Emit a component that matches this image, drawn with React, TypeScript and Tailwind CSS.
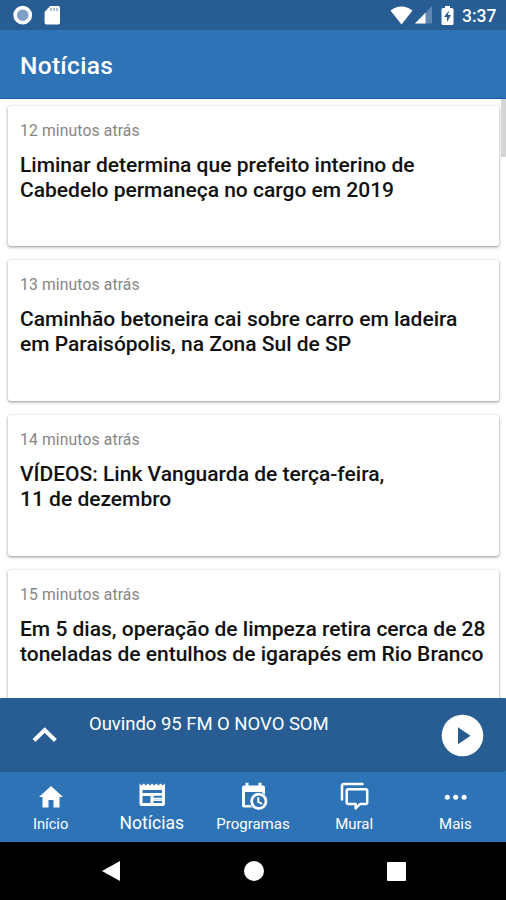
const news = [
  { time: '12 minutos atrás', lines: ['Liminar determina que prefeito interino de', 'Cabedelo permaneça no cargo em 2019'] },
  { time: '13 minutos atrás', lines: ['Caminhão betoneira cai sobre carro em ladeira', 'em Paraisópolis, na Zona Sul de SP'] },
  { time: '14 minutos atrás', lines: ['VÍDEOS: Link Vanguarda de terça-feira,', '11 de dezembro'] },
  { time: '15 minutos atrás', lines: ['Em 5 dias, operação de limpeza retira cerca de 28', 'toneladas de entulhos de igarapés em Rio Branco'] },
];

function StatusBar() {
  return (
    <div className="flex h-[30px] shrink-0 items-center bg-[#275d92] pl-[13px] pr-[9px]">
      <svg width="20" height="20" viewBox="0 0 20 20">
        <circle cx="9.7" cy="10.200" r="7.6" fill="#7f9fc6" stroke="#fff" strokeWidth="3.6" />
      </svg>
      <svg className="ml-[11px]" width="18" height="20" viewBox="0 0 18 20">
        <path fill="#fff" d="M6.2 1H14.2Q16 1 16 2.8V17.7Q16 19.5 14.2 19.5H2.3Q.6 19.5.6 17.7V7Z" />
        <path stroke="#275d92" strokeWidth="1.3" d="M7 3v3M10 3v3M13 3v3" opacity=".6" />
      </svg>
      <div className="grow" />
      <svg width="23" height="19" viewBox="0 0 23 19">
        <path fill="#fff" d="M.5 4.6Q11.500-3.400 22.500 4.600L11.500 18.500Z" />
      </svg>
      <svg className="ml-[1px]" width="19" height="18" viewBox="0 0 19 18">
        <path fill="#5f87b3" d="M18 0V17.500H1Z" />
        <path fill="#fff" d="M11.500 6.800V17.500H1Z" />
      </svg>
      <svg className="ml-[8px]" width="13" height="19" viewBox="0 0 13 19">
        <path fill="#fff" d="M4 0h5v2h2q1.500 0 1.500 1.500v14q0 1.500-1.500 1.500H2q-1.500 0-1.500-1.500v-14Q.5 2 2 2h2z" />
        <path fill="#275d92" d="M8 4.500 3 11h3v5l4-7H7z" />
      </svg>
      <span className="ml-[8px] w-[35px] whitespace-nowrap pt-px text-[17.500px] font-medium leading-[30px] text-white">3:37</span>
    </div>
  );
}

function NewsCard({ time, lines }: { time: string; lines: string[] }) {
  return (
    <article className="h-[140.700px] shrink-0 rounded-[3px] bg-white px-[12px] pt-[15px] shadow-[0_1px_3px_1px_rgba(0,0,0,0.16),0_1px_2px_rgba(0,0,0,0.22)]">
      <p className="text-[15.700px] leading-[20px] tracking-[0.130px] text-[#868686]">{time}</p>
      <h2 className="mt-[12.300px] whitespace-nowrap text-[21px] font-medium leading-[24.700px] text-[#111]">
        {lines.map((line) => (
          <span key={line} className="block">{line}</span>
        ))}
      </h2>
    </article>
  );
}

function Player() {
  return (
    <div className="flex h-[74px] shrink-0 items-center rounded-[3px] bg-[#275d92] pl-[31px] pr-[22px]">
      <svg width="28" height="20" viewBox="0 0 28 20" fill="none" stroke="#fff" strokeWidth="4">
        <path d="M3 15.500 13.700 5 24.400 15.500" />
      </svg>
      <span className="ml-[30px] -mt-[22px] grow whitespace-nowrap text-[18.500px] leading-[24px] tracking-[-0.030px] text-white">Ouvindo 95 FM O NOVO SOM</span>
      <svg width="43" height="43" viewBox="0 0 43 43">
        <circle cx="21.500" cy="21.500" r="20.800" fill="#fff" />
        <path d="M17 13.200 29.500 21.700 17 30.200Z" fill="#275d92" />
      </svg>
    </div>
  );
}

function HomeIcon() {
  return (
    <svg width="30" height="30" viewBox="0 0 30 30" fill="#fff">
      <path d="M15 4 3 15h3.500v10.500h6v-7.500h5v7.500h6V15H27z" />
    </svg>
  );
}

function NewsIcon() {
  return (
    <svg width="30" height="30" viewBox="0 0 30 30">
      <path fill="#fff" fillRule="evenodd" d="M2.500 1.500 4.600 3.500 6.700 1.500 8.800 3.500 10.900 1.500 13 3.500 15.100 1.500 17.200 3.500 19.300 1.500 21.400 3.500 23.500 1.500 25.600 3.500 28 1.500V21.700Q28 24 25.700 24H4.800Q2.500 24 2.500 21.700ZM5.500 8v3h19.500V8ZM5.500 14v7h8v-7ZM16.500 13.800v1.900h8.500v-1.900ZM16.500 19v1.900h8.500v-1.900Z" />
      <path fill="#2e73b6" opacity=".35" d="M16.500 17.300h8.500v.9h-8.500z" />
    </svg>
  );
}

function ScheduleIcon() {
  return (
    <svg width="30" height="30" viewBox="0 0 30 30">
      <path fill="#fff" d="M4 5.500q0-2 2-2h1.500V.8h3v2.700h10V.8h3v2.700H25q2 0 2 2v20H6q-2 0-2-2z" />
      <path fill="#2e73b6" d="M7 10h17v13H7z" />
      <circle cx="20.800" cy="19.300" r="8.900" fill="#fff" stroke="#2e73b6" strokeWidth=".8" />
      <circle cx="20.800" cy="19.300" r="5.800" fill="#2e73b6" />
      <path d="M20.300 15.300v4.500l3.800 2.200" fill="none" stroke="#fff" strokeWidth="2" />
    </svg>
  );
}

function ChatIcon() {
  return (
    <svg width="30" height="30" viewBox="0 0 30 30" fill="none" stroke="#fff" strokeWidth="2.500" strokeLinejoin="round">
      <path d="M3 18.500V3.700Q3 1.900 4.800 1.900H24.500" />
      <path d="M9.200 7.300H26.700Q28.200 7.300 28.200 8.800V20.500Q28.200 22 26.700 22H21L16.700 26.500V22H9.200Q7.700 22 7.700 20.500V8.800Q7.700 7.300 9.200 7.300Z" />
    </svg>
  );
}

function MoreIcon() {
  return (
    <svg width="30" height="30" viewBox="0 0 30 30" fill="#fff">
      <circle cx="7.300" cy="15.200" r="2.500" />
      <circle cx="15.700" cy="15.200" r="2.500" />
      <circle cx="24.100" cy="15.200" r="2.500" />
    </svg>
  );
}

const tabs = [
  { label: 'Início', Icon: HomeIcon, text: 'mt-[2px] text-[14.700px]' },
  { label: 'Notícias', Icon: NewsIcon, text: 'mt-[1px] text-[17.500px]' },
  { label: 'Programas', Icon: ScheduleIcon, text: 'mt-[2px] text-[15px]' },
  { label: 'Mural', Icon: ChatIcon, text: 'mt-[2px] text-[15px]' },
  { label: 'Mais', Icon: MoreIcon, text: 'mt-[2px] text-[15px]' },
];

export default function App() {
  return (
    <div className="flex h-[900px] w-[506px] flex-col overflow-hidden bg-black font-['Roboto',sans-serif]">
      <StatusBar />
      <header className="flex h-[68.500px] shrink-0 items-center border-b border-[#175bab] bg-[#2e73b6] pl-5 pt-[5px]">
        <h1 className="text-[24.500px] font-medium tracking-[0.300px] text-white">Notícias</h1>
      </header>
      <main className="flex h-[599.500px] shrink-0 overflow-hidden bg-white">
        <div className="flex w-[500px] shrink-0 flex-col gap-[14px] pl-[8px] pr-[1px] pt-[7px]">
          {news.map((item) => (
            <NewsCard key={item.time} {...item} />
          ))}
        </div>
        <div className="ml-[1px] h-[58px] w-[5px] bg-[#d5d5d5]" />
      </main>
      <div className="shrink-0 bg-[#2e73b6]">
        <Player />
      </div>
      <nav className="grid h-[70px] shrink-0 grid-cols-5 bg-[#2e73b6]">
        {tabs.map(({ label, Icon, text }) => (
          <div key={label} className="flex flex-col items-center pt-[10px] text-white">
            <Icon />
            <span className={'leading-5 ' + text}>{label}</span>
          </div>
        ))}
      </nav>
      <div className="flex h-[58px] shrink-0 items-center justify-between bg-black pl-[101px] pr-[100px]">
        <svg width="20" height="22" viewBox="0 0 20 22"><path d="M19 1v20L1 11z" fill="#fff" /></svg>
        <div className="size-[20px] rounded-full bg-white" />
        <div className="size-[19px] rounded-[1px] bg-white" />
      </div>
    </div>
  );
}
